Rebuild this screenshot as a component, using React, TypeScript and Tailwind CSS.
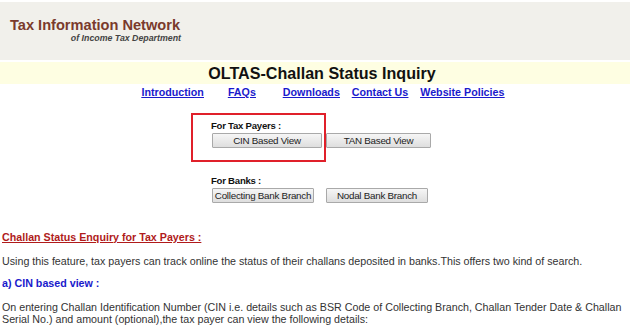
import React from "react";

const Btn = ({ children, w }: { children: React.ReactNode; w: string }) => (
  <button
    className={`h-[15px] ${w} flex items-center justify-center whitespace-nowrap border border-[#a9a9a9] bg-gradient-to-b from-[#f6f6f6] to-[#dedede] text-[9.8px] tracking-[-0.25px] leading-none text-[#222] rounded-[1px]`}
  >
    {children}
  </button>
);

export default function App() {
  return (
    <div className="w-[630px] h-[335px] overflow-hidden bg-white font-['Liberation_Sans',Arial,sans-serif] text-[#333]">
      <div className="mt-[2px] h-[58px] bg-[#f1f0eb] pl-[10px] pt-[16px]">
        <div className="w-[171px]">
          <div className="text-[14.6px] font-bold leading-[14px] text-[#7a3a2c] whitespace-nowrap">Tax Information Network</div>
          <div className="text-right text-[8.8px] font-bold italic leading-[11px] text-[#444] mt-[1px] whitespace-nowrap">of Income Tax Department</div>
        </div>
      </div>
      <div className="mt-[2px] h-[22px] bg-[#fefee2] flex items-center justify-center">
        <div className="text-[16.1px] font-bold text-[#111] leading-none ml-[14px]">OLTAS-Challan Status Inquiry</div>
      </div>
      <div className="flex justify-center mt-[1px] ml-[16px] text-[10.7px] font-bold text-[#1a1acc] underline leading-[14px]">
        <a>Introduction</a>
        <a className="ml-[24px]">FAQs</a>
        <a className="ml-[27px]">Downloads</a>
        <a className="ml-[12px]">Contact Us</a>
        <a className="ml-[12px]">Website Policies</a>
      </div>
      <div className="relative ml-[212px] mt-[21px] w-fit">
        <div className="absolute left-[-21px] top-[-7px] w-[135px] h-[49px] border-[2.5px] border-[#e0202a]"></div>
        <div className="-ml-[1px] text-[9.6px] tracking-[-0.25px] font-bold text-[#111] leading-[12px]">For Tax Payers :</div>
        <div className="mt-[1px] flex gap-[4px]">
          <Btn w="w-[110px]">CIN Based View</Btn>
          <Btn w="w-[105px]">TAN Based View</Btn>
        </div>
      </div>
      <div className="ml-[212px] mt-[27px]">
        <div className="-ml-[1px] text-[9.6px] tracking-[-0.25px] font-bold text-[#111] leading-[12px]">For Banks :</div>
        <div className="mt-[1px] flex gap-[12px]">
          <Btn w="w-[102px]">Collecting Bank Branch</Btn>
          <Btn w="w-[102px]">Nodal Bank Branch</Btn>
        </div>
      </div>
      <div className="pl-[2px] mt-[27px] text-[10.7px] leading-[14px]">
        <div className="font-bold underline text-[#b01b1b]">Challan Status Enquiry for Tax Payers :</div>
        <div className="mt-[10px]">Using this feature, tax payers can track online the status of their challans deposited in banks.This offers two kind of search.</div>
        <div className="mt-[8px] font-bold text-[#1a1acc]">a) CIN based view :</div>
        <div className="mt-[11px] leading-[12px] w-[626px]">
          On entering Challan Identification Number (CIN i.e. details such as BSR Code of Collecting Branch, Challan Tender Date &amp; Challan Serial No.) and amount (optional),the tax payer can view the following details:
        </div>
      </div>
    </div>
  );
}
